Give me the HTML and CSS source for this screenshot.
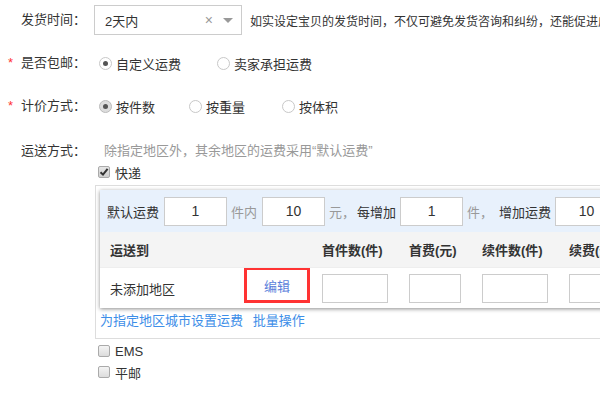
FILE: index.html
```html
<!DOCTYPE html>
<html lang="zh-CN">
<head>
  <meta charset="UTF-8">
  <title>运费设置</title>
  <link rel="stylesheet" href="styles.css">
</head>
<body>
  <div class="form">
    <div class="row row-time">
      <div class="label"><span class="star"></span>发货时间：</div>
      <div class="select">
        <span class="select-value">2天内</span>
        <span class="select-clear">×</span>
        <span class="select-arrow"></span>
      </div>
      <div class="tip">如实设定宝贝的发货时间，不仅可避免发货咨询和纠纷，还能促进成交</div>
    </div>

    <div class="row row-post">
      <div class="label"><span class="star">*</span>是否包邮：</div>
      <label class="radio radio-first"><span class="dot checked"></span>自定义运费</label>
      <label class="radio radio-seller"><span class="dot"></span>卖家承担运费</label>
    </div>

    <div class="row row-price">
      <div class="label"><span class="star">*</span>计价方式：</div>
      <label class="radio radio-first"><span class="dot checked focus"></span>按件数</label>
      <label class="radio radio-weight"><span class="dot"></span>按重量</label>
      <label class="radio radio-volume"><span class="dot"></span>按体积</label>
    </div>

    <div class="row-ship">
      <div class="label"><span class="star"></span>运送方式：</div>
      <div class="ship-body">
        <div class="ship-hint">除指定地区外，其余地区的运费采用“默认运费”</div>
        <label class="check"><span class="box checked">
          <svg width="10" height="10" viewBox="0 0 10 10"><path d="M1.5 5.2 L4 7.6 L8.6 1.8" fill="none" stroke="#333" stroke-width="2"/></svg>
        </span>快递</label>

        <div class="ship-area">
          <div class="panel">
            <div class="default-row">
              <span class="dark">默认运费</span>
              <input class="num" value="1">
              <span class="muted">件内</span>
              <input class="num" value="10">
              <span class="muted">元，</span>
              <span class="dark ml">每增加</span>
              <input class="num" value="1">
              <span class="muted">件，</span>
              <span class="dark ml2">增加运费</span>
              <input class="num" value="10">
            </div>
            <table class="fee-table">
              <tr class="head">
                <th class="c-area">运送到</th>
                <th class="c-edit"></th>
                <th class="c-first">首件数(件)</th>
                <th class="c-fee">首费(元)</th>
                <th class="c-next">续件数(件)</th>
                <th class="c-rest">续费(元)</th>
              </tr>
              <tr class="data">
                <td class="c-area">未添加地区</td>
                <td class="c-edit"><span class="edit">编辑</span></td>
                <td class="c-first"><input class="cell w66"></td>
                <td class="c-fee"><input class="cell w52"></td>
                <td class="c-next"><input class="cell w66"></td>
                <td class="c-rest"><input class="cell w66"></td>
              </tr>
            </table>
          </div>
          <div class="links">
            <a href="#">为指定地区城市设置运费</a>
            <a href="#" class="batch">批量操作</a>
          </div>
        </div>

        <label class="check check-ems"><span class="box"></span>EMS</label>
        <label class="check check-mail"><span class="box"></span>平邮</label>
      </div>
    </div>
  </div>
</body>
</html>
```

FILE: styles.css
```css
html, body {
  margin: 0;
  overflow: hidden;
}
body {
  font-family: "Liberation Sans", "Noto Sans CJK SC", sans-serif;
  font-size: 13px;
  color: #333;
  background: #fff;
  width: 600px;
  height: 400px;
}
.form {
  padding-left: 8px;
  width: 800px;
}
.row {
  display: flex;
  align-items: center;
  white-space: nowrap;
}
.label {
  width: 86px;
  flex-shrink: 0;
  line-height: 18px;
}
.star {
  display: inline-block;
  width: 13px;
  color: #f33;
}

/* 发货时间 */
.row-time {
  margin-top: 5px;
  height: 30px;
}
.select {
  width: 146px;
  height: 28px;
  border: 1px solid #ccc;
  display: flex;
  align-items: center;
  box-sizing: content-box;
}
.select-value {
  margin-left: 10px;
  flex: 1;
  color: #333;
}
.select-clear {
  color: #999;
  font-size: 14px;
  margin-right: 10px;
}
.select-arrow {
  width: 0;
  height: 0;
  border-left: 5px solid transparent;
  border-right: 5px solid transparent;
  border-top: 5px solid #999;
  margin-right: 8px;
  margin-top: 1px;
}
.tip {
  margin-left: 8px;
  font-size: 12px;
}

/* radios */
.row-post {
  margin-top: 19px;
  height: 18px;
}
.row-price {
  margin-top: 25px;
  height: 18px;
}
.radio {
  display: flex;
  align-items: center;
}
.dot {
  width: 11px;
  height: 11px;
  border: 1px solid #c8c8c8;
  border-radius: 50%;
  margin-right: 4px;
  background: #fff;
  position: relative;
}
.dot.checked::after {
  content: "";
  position: absolute;
  left: 3px;
  top: 3px;
  width: 5px;
  height: 5px;
  border-radius: 50%;
  background: #555;
}
.dot.focus {
  background: #ddd;
  border-color: #bbb;
}
.radio-first { margin-left: 5px; }
.radio-seller { margin-left: 36px; }
.radio-weight { margin-left: 34px; }
.radio-volume { margin-left: 37px; }

/* 运送方式 */
.row-ship {
  display: flex;
  margin-top: 27px;
  white-space: nowrap;
}
.ship-body {
  flex: 1;
}
.ship-hint {
  line-height: 18px;
  color: #999;
  margin-left: 10px;
}
.check {
  display: flex;
  align-items: center;
  height: 18px;
  margin-left: 4px;
  color: #333;
}
.check .box {
  width: 10px;
  height: 10px;
  border: 1px solid #aaa;
  border-radius: 2px;
  background: linear-gradient(#f4f4f4, #dcdcdc);
  margin-right: 5px;
  display: flex;
  align-items: center;
  justify-content: center;
}
.check .box.checked {
  background: linear-gradient(#e6e6e6, #cfcfcf);
}
.row-ship .check:first-of-type {
  margin-top: 3px;
}
.ship-area {
  margin-top: 4px;
  margin-left: 1px;
  width: 640px;
  border: 1px solid #ddd;
  padding: 4px 0 0 4px;
  height: 148px;
  box-sizing: content-box;
}
.panel {
  box-shadow: 0 1px 4px rgba(0, 0, 0, 0.45);
  background: #fff;
}
.default-row {
  display: flex;
  align-items: center;
  height: 42px;
  background: #e8f1fc;
  padding-left: 7px;
}
.default-row .num {
  width: 61px;
  height: 27px;
  border: 1px solid #ccc;
  text-align: center;
  font: 14px "Liberation Sans", sans-serif;
  color: #333;
  padding: 0;
  margin: 0 4px;
  outline: none;
}
.default-row .num:first-of-type {
  margin-left: 5px;
}
.muted {
  color: #999;
}
.dark {
  color: #333;
}
.ml {
  margin-left: 2px;
}
.ml2 {
  margin-left: 6px;
}
.default-row .muted + .num {
  margin-left: 5px;
}
.fee-table {
  border-collapse: collapse;
  width: 100%;
}
.fee-table th {
  background: #f4f4f4;
  height: 35px;
  text-align: left;
  font-weight: bold;
  color: #333;
  padding: 0 0 0 10px;
  border-bottom: 1px solid #eee;
}
.fee-table td {
  height: 40px;
  padding: 0 0 0 10px;
}
.c-area { width: 134px; }
.c-edit { width: 58px; }
.c-first { width: 77px; }
.c-fee { width: 63px; }
.c-next { width: 77px; }
.fee-table td.c-edit {
  padding: 0;
}
.edit {
  display: flex;
  align-items: center;
  justify-content: center;
  width: 60px;
  height: 30px;
  border: 3px solid #f33;
  color: #5b7fdb;
  margin-top: -6px;
}
.cell {
  height: 27px;
  border: 1px solid #ccc;
  padding: 0;
  margin: 0;
  outline: none;
  display: block;
}
.w66 { width: 64px; }
.w52 { width: 50px; }
.links {
  height: 26px;
  line-height: 26px;
}
.links a {
  color: #3d8ee8;
  text-decoration: none;
}
.links a.batch {
  margin-left: 6px;
}
.check-ems {
  margin-top: 3px;
}
.check-mail {
  margin-top: 3px;
}
```
